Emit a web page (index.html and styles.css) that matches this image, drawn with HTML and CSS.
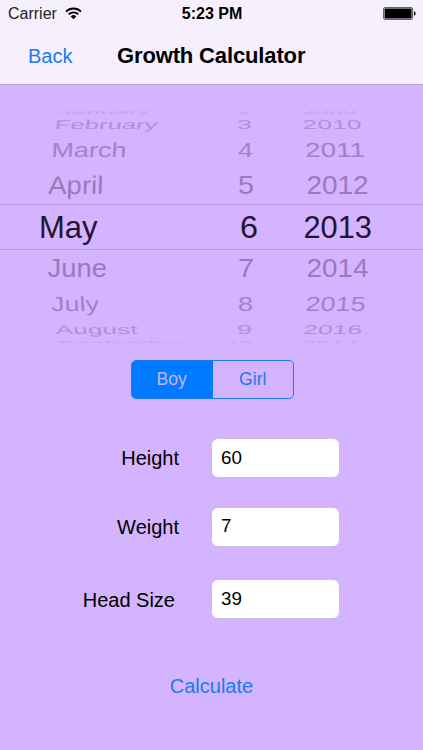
FILE: index.html
```html
<!DOCTYPE html>
<html lang="en">
<head>
    <meta charset="UTF-8">
    <meta name="viewport" content="width=device-width, initial-scale=1.0">
    <title>Growth Calculator</title>
    <link rel="stylesheet" href="styles.css">
</head>
<body>
    <header>
        <div class="statusBar">
            <div class="carrier">
                <span>Carrier</span>
                <svg width="17" height="13" viewBox="0 0 17 13">
                    <path d="M1 4.6a10.6 10.6 0 0 1 15 0M3.7 7.4a6.8 6.8 0 0 1 9.6 0" fill="none" stroke="#000" stroke-width="1.9"/>
                    <path d="M8.5 12.2L5.7 9.4a4 4 0 0 1 5.6 0z"/>
                </svg>
            </div>
            <span class="time">5:23 PM</span>
            <svg class="battery" width="33" height="13" viewBox="0 0 33 13">
                <rect x=".6" y=".6" width="29" height="11.8" rx="1.5" fill="none" stroke="#555" stroke-width="1"/>
                <rect x="1.6" y="1.6" width="27" height="9.8" rx=".6"/>
                <path d="M31 4.3q1.6.5 1.6 2.2t-1.6 2.2z"/>
            </svg>
        </div>
        <nav>
            <a class="back">Back</a>
            <h1>Growth Calculator</h1>
        </nav>
    </header>

    <main>
        <!-- date wheel: rows get flatter and paler away from the middle -->
        <svg class="picker" width="423" height="275" viewBox="0 85 423 275">
            <clipPath id="wheel"><rect x="0" y="111" width="423" height="232"/></clipPath>
            <path class="line" d="M0 204.5H423M0 249.5H423"/>
            <g clip-path="url(#wheel)">
                <g class="far" font-size="6">
                    <text transform="translate(59 113.6) skewX(-20)" textLength="90" lengthAdjust="spacingAndGlyphs">January</text>
                    <text transform="translate(237 113.6)" textLength="13" lengthAdjust="spacingAndGlyphs">2</text>
                    <text transform="translate(301 113.6) skewX(10)" textLength="56" lengthAdjust="spacingAndGlyphs">2009</text>
                    <text transform="translate(59 345.4) skewX(20)" textLength="127" lengthAdjust="spacingAndGlyphs">September</text>
                    <text transform="translate(227 345.4)" textLength="25" lengthAdjust="spacingAndGlyphs">10</text>
                    <text transform="translate(301 345.4) skewX(-20)" textLength="56" lengthAdjust="spacingAndGlyphs">2017</text>
                </g>
                <g class="third" font-size="12.8">
                    <text transform="translate(54 129) skewX(-10)" textLength="103" lengthAdjust="spacingAndGlyphs">February</text>
                    <text transform="translate(237 129)" textLength="15" lengthAdjust="spacingAndGlyphs">3</text>
                    <text transform="translate(303 129) skewX(6)" textLength="59" lengthAdjust="spacingAndGlyphs">2010</text>
                    <text transform="translate(56 333.8) skewX(6)" textLength="82" lengthAdjust="spacingAndGlyphs">August</text>
                    <text transform="translate(237 333.8)" textLength="15" lengthAdjust="spacingAndGlyphs">9</text>
                    <text transform="translate(302.5 333.8) skewX(-10)" textLength="59" lengthAdjust="spacingAndGlyphs">2016</text>
                </g>
                <g class="second" font-size="20.5">
                    <text transform="translate(51 157) skewX(-4)" textLength="75" lengthAdjust="spacingAndGlyphs">March</text>
                    <text transform="translate(238 157)" textLength="15" lengthAdjust="spacingAndGlyphs">4</text>
                    <text transform="translate(305.5 157) skewX(3)" textLength="60" lengthAdjust="spacingAndGlyphs">2011</text>
                    <text transform="translate(51.5 311) skewX(4)" textLength="48" lengthAdjust="spacingAndGlyphs">July</text>
                    <text transform="translate(238 311)" textLength="15" lengthAdjust="spacingAndGlyphs">8</text>
                    <text transform="translate(305 311) skewX(-5)" textLength="60" lengthAdjust="spacingAndGlyphs">2015</text>
                </g>
                <g class="first" font-size="25.5">
                    <text transform="translate(48 194.3) skewX(-2)" textLength="55" lengthAdjust="spacingAndGlyphs">April</text>
                    <text transform="translate(238 194.3)" textLength="16" lengthAdjust="spacingAndGlyphs">5</text>
                    <text transform="translate(306.5 194.3)" textLength="62" lengthAdjust="spacingAndGlyphs">2012</text>
                    <text transform="translate(47.5 277.2)" textLength="59.5" lengthAdjust="spacingAndGlyphs">June</text>
                    <text transform="translate(238 277.2)" textLength="16" lengthAdjust="spacingAndGlyphs">7</text>
                    <text transform="translate(306.5 277.2)" textLength="62" lengthAdjust="spacingAndGlyphs">2014</text>
                </g>
                <g class="current" font-size="30.5">
                    <text x="39" y="238" textLength="58.5" lengthAdjust="spacingAndGlyphs">May</text>
                    <text x="240" y="238" textLength="18" lengthAdjust="spacingAndGlyphs">6</text>
                    <text x="303.5" y="238" textLength="68.5" lengthAdjust="spacingAndGlyphs">2013</text>
                </g>
            </g>
        </svg>

        <div class="segments">
            <span class="active">Boy</span>
            <span>Girl</span>
        </div>

        <form>
            <label class="row">
                <span class="labelText">Height</span>
                <input type="text" name="height" value="60">
            </label>
            <label class="row weight">
                <span class="labelText">Weight</span>
                <input type="text" name="weight" value="7">
            </label>
            <label class="row head">
                <span class="labelText">Head Size</span>
                <input type="text" name="head" value="39">
            </label>
            <a class="calculate">Calculate</a>
        </form>
    </main>
</body>
</html>
```
FILE: styles.css
```css
*{
    box-sizing: border-box;
}

body{
    margin: 0;
    height: 750px;
    overflow: hidden;
    background-color: #d4b4ff;
    font-family: "Liberation Sans", Arial, sans-serif;
    font-size: 20px;
    color: #000;
}

header{
    height: 85px;
    background-color: #f6effe;
    border-bottom: 1px solid #b5a3ca;
}

.statusBar{
    display: grid;
    grid-template-columns: 1fr auto 1fr;
    align-items: center;
    height: 28px;
    padding: 0 7px 0 8px;
    font-size: 16px;
}

.carrier{
    display: flex;
    align-items: center;
    gap: 8px;
    color: #222;
}

.carrier svg{
    margin-top: -1px;
}

.time{
    font-weight: bold;
}

.battery{
    justify-self: end;
    margin-bottom: 1px;
}

nav{
    display: grid;
    grid-template-columns: 117px 1fr;
    align-items: center;
    height: 56px;
}

.back{
    padding-left: 28px;
    color: #1a7bf0;
}

nav h1{
    margin: 0;
    font-size: 22px;
    letter-spacing: -0.14px;
}

.picker{
    display: block;
}

.picker .line{
    stroke: #b499d6;
    stroke-width: 1;
}

.far{
    fill: #c3a4ea;
}

.third{
    fill: #b090d6;
}

.second{
    fill: #a182c5;
}

.first{
    fill: #997abb;
}

.current{
    fill: #23152f;
}

.segments{
    display: grid;
    grid-template-columns: 1fr 1fr;
    width: 163px;
    height: 39px;
    margin-left: 131px;
    border: 1.5px solid #1a7bf0;
    border-radius: 5px;
    overflow: hidden;
    font-size: 17.6px;
    line-height: 37px;
    text-align: center;
    color: #1a7bf0;
}

.segments .active{
    padding-right: 1px;
    background-color: #007aff;
    color: #c3b4fa;
}

form{
    display: flex;
    flex-direction: column;
    padding-top: 39px;
}

.row{
    display: grid;
    grid-template-columns: 179px 129px;
    column-gap: 32px;
    align-items: center;
    height: 40px;
}

.row.weight{
    margin-top: 29px;
}

.row.head{
    grid-template-columns: 175px 129px;
    column-gap: 36px;
    margin-top: 32px;
}

.labelText{
    text-align: right;
}

.row.head .labelText{
    padding-top: 2px;
}

.row input{
    width: 129px;
    height: 40px;
    padding: 0 8px 0 9px;
    border: 1px solid #cdbbe4;
    border-radius: 7px;
    background-color: #fff;
    font-family: inherit;
    font-size: 18.8px;
    color: #000;
}

.row.weight input{
    padding-bottom: 2px;
}

.calculate{
    margin-top: 56px;
    text-align: center;
    color: #1a7bf0;
}
```
